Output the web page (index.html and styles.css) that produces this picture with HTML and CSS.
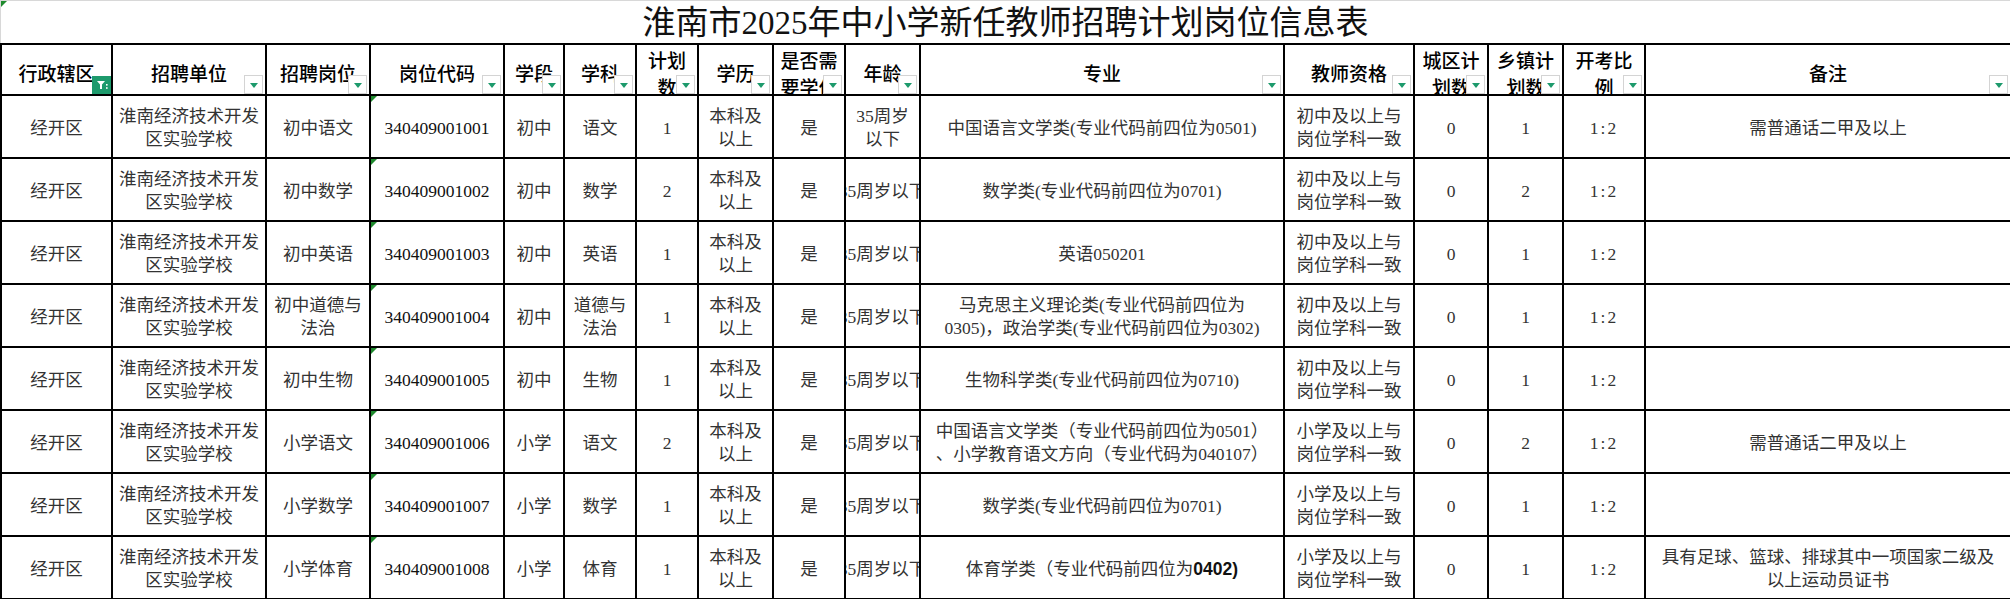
FILE: index.html
```html
<!DOCTYPE html>
<html lang="zh-CN">
<head>
<meta charset="utf-8">
<title>淮南市2025年中小学新任教师招聘计划岗位信息表</title>
<link rel="stylesheet" href="styles.css">
</head>
<body>
<div class="sheet">
  <div class="title"><span class="mark"></span>淮南市2025年中小学新任教师招聘计划岗位信息表</div>
  <table class="grid">
    <colgroup>
      <col class="c1"><col class="c2"><col class="c3"><col class="c4"><col class="c5"><col class="c6"><col class="c7"><col class="c8">
      <col class="c9"><col class="c10"><col class="c11"><col class="c12"><col class="c13"><col class="c14"><col class="c15"><col class="c16">
    </colgroup>
    <thead>
      <tr class="hrow">
        <th><div class="h">行政辖区</div><span class="filter on"><svg viewBox="0 0 18 18" width="18" height="18"><path d="M4 5h8l-3 3.5v4.5h-2v-4.5z" fill="#fff"/><rect x="13" y="8" width="1.6" height="1.6" fill="#fff"/><rect x="13" y="11.2" width="1.6" height="1.6" fill="#fff"/></svg></span></th>
        <th><div class="h">招聘单位</div><span class="filter"><i></i></span></th>
        <th><div class="h">招聘岗位</div><span class="filter"><i></i></span></th>
        <th><div class="h">岗位代码</div><span class="filter"><i></i></span></th>
        <th><div class="h">学段</div><span class="filter"><i></i></span></th>
        <th><div class="h">学科</div><span class="filter"><i></i></span></th>
        <th><div class="h">计划<br>数</div><span class="filter"><i></i></span></th>
        <th><div class="h">学历</div><span class="filter"><i></i></span></th>
        <th><div class="h">是否需<br>要学位</div><span class="filter"><i></i></span></th>
        <th><div class="h">年龄</div><span class="filter"><i></i></span></th>
        <th><div class="h">专业</div><span class="filter"><i></i></span></th>
        <th><div class="h">教师资格</div><span class="filter"><i></i></span></th>
        <th><div class="h">城区计<br>划数</div><span class="filter"><i></i></span></th>
        <th><div class="h">乡镇计<br>划数</div><span class="filter"><i></i></span></th>
        <th><div class="h">开考比<br>例</div><span class="filter"><i></i></span></th>
        <th><div class="h">备注</div><span class="filter"><i></i></span></th>
      </tr>
    </thead>
    <tbody>
      <tr>
        <td>经开区</td><td>淮南经济技术开发<br>区实验学校</td><td>初中语文</td><td class="code">340409001001</td>
        <td>初中</td><td>语文</td><td>1</td><td>本科及<br>以上</td><td>是</td><td>35周岁<br>以下</td>
        <td>中国语言文学类(专业代码前四位为0501)</td><td>初中及以上与<br>岗位学科一致</td><td>0</td><td>1</td><td class="ratio">1:2</td><td>需普通话二甲及以上</td>
      </tr>
      <tr>
        <td>经开区</td><td>淮南经济技术开发<br>区实验学校</td><td>初中数学</td><td class="code">340409001002</td>
        <td>初中</td><td>数学</td><td>2</td><td>本科及<br>以上</td><td>是</td><td class="clip"><div>35周岁以下</div></td>
        <td>数学类(专业代码前四位为0701)</td><td>初中及以上与<br>岗位学科一致</td><td>0</td><td>2</td><td class="ratio">1:2</td><td></td>
      </tr>
      <tr>
        <td>经开区</td><td>淮南经济技术开发<br>区实验学校</td><td>初中英语</td><td class="code">340409001003</td>
        <td>初中</td><td>英语</td><td>1</td><td>本科及<br>以上</td><td>是</td><td class="clip"><div>35周岁以下</div></td>
        <td>英语050201</td><td>初中及以上与<br>岗位学科一致</td><td>0</td><td>1</td><td class="ratio">1:2</td><td></td>
      </tr>
      <tr>
        <td>经开区</td><td>淮南经济技术开发<br>区实验学校</td><td>初中道德与<br>法治</td><td class="code">340409001004</td>
        <td>初中</td><td>道德与<br>法治</td><td>1</td><td>本科及<br>以上</td><td>是</td><td class="clip"><div>35周岁以下</div></td>
        <td>马克思主义理论类(专业代码前四位为<br>0305)，政治学类(专业代码前四位为0302)</td><td>初中及以上与<br>岗位学科一致</td><td>0</td><td>1</td><td class="ratio">1:2</td><td></td>
      </tr>
      <tr>
        <td>经开区</td><td>淮南经济技术开发<br>区实验学校</td><td>初中生物</td><td class="code">340409001005</td>
        <td>初中</td><td>生物</td><td>1</td><td>本科及<br>以上</td><td>是</td><td class="clip"><div>35周岁以下</div></td>
        <td>生物科学类(专业代码前四位为0710)</td><td>初中及以上与<br>岗位学科一致</td><td>0</td><td>1</td><td class="ratio">1:2</td><td></td>
      </tr>
      <tr>
        <td>经开区</td><td>淮南经济技术开发<br>区实验学校</td><td>小学语文</td><td class="code">340409001006</td>
        <td>小学</td><td>语文</td><td>2</td><td>本科及<br>以上</td><td>是</td><td class="clip"><div>35周岁以下</div></td>
        <td>中国语言文学类（专业代码前四位为0501）<br>、小学教育语文方向（专业代码为040107）</td><td>小学及以上与<br>岗位学科一致</td><td>0</td><td>2</td><td class="ratio">1:2</td><td>需普通话二甲及以上</td>
      </tr>
      <tr>
        <td>经开区</td><td>淮南经济技术开发<br>区实验学校</td><td>小学数学</td><td class="code">340409001007</td>
        <td>小学</td><td>数学</td><td>1</td><td>本科及<br>以上</td><td>是</td><td class="clip"><div>35周岁以下</div></td>
        <td>数学类(专业代码前四位为0701)</td><td>小学及以上与<br>岗位学科一致</td><td>0</td><td>1</td><td class="ratio">1:2</td><td></td>
      </tr>
      <tr>
        <td>经开区</td><td>淮南经济技术开发<br>区实验学校</td><td>小学体育</td><td class="code">340409001008</td>
        <td>小学</td><td>体育</td><td>1</td><td>本科及<br>以上</td><td>是</td><td class="clip"><div>35周岁以下</div></td>
        <td>体育学类（专业代码前四位为<span class="sans">0402)</span></td><td>小学及以上与<br>岗位学科一致</td><td>0</td><td>1</td><td class="ratio">1:2</td><td>具有足球、篮球、排球其中一项国家二级及<br>以上运动员证书</td>
      </tr>
    </tbody>
  </table>
</div>
</body>
</html>
```

FILE: styles.css
```css
html, body {
  margin: 0;
  padding: 0;
  background: #fff;
}

.sheet {
  width: 2010px;
}

.title {
  position: relative;
  border-top: 1px solid #d8d8d8;
  border-left: 1px solid #d8d8d8;
  box-sizing: border-box;
  height: 43px;
  text-align: center;
  font-family: "Liberation Serif", "Noto Sans CJK SC", serif;
  font-size: 33px;
  line-height: 44px;
  color: #111;
  white-space: nowrap;
}

.mark {
  position: absolute;
  left: 0;
  top: 0;
  width: 0;
  height: 0;
  border-top: 6px solid #1f8a2e;
  border-right: 6px solid transparent;
}

.grid {
  border-collapse: collapse;
  table-layout: fixed;
  width: 2010px;
}

.c1 { width: 111px; }
.c2 { width: 154px; }
.c3 { width: 104px; }
.c4 { width: 134px; }
.c5 { width: 60px; }
.c6 { width: 72px; }
.c7 { width: 62px; }
.c8 { width: 75px; }
.c9 { width: 72px; }
.c10 { width: 75px; }
.c11 { width: 364px; }
.c12 { width: 130px; }
.c13 { width: 74px; }
.c14 { width: 75px; }
.c15 { width: 82px; }
.c16 { width: 366px; }

.grid th,
.grid td {
  border: 2px solid #000;
  padding: 0;
  text-align: center;
  vertical-align: middle;
  overflow: hidden;
  white-space: nowrap;
}

.grid th {
  position: relative;
  height: 49px;
  vertical-align: top;
  font-family: "Noto Sans CJK SC", sans-serif;
  font-weight: 500;
  font-size: 19px;
  line-height: 27px;
  color: #000;
}

.grid th .h {
  box-sizing: border-box;
  height: 49px;
  padding-top: 6px;
  display: flex;
  flex-direction: column;
  justify-content: center;
  align-items: center;
}

.grid td {
  height: 63px;
  font-family: "Liberation Serif", "Noto Sans CJK SC", serif;
  font-size: 17.5px;
  line-height: 23px;
  color: #333;
  padding-top: 3px;
  box-sizing: border-box;
}

.grid td.code {
  position: relative;
  color: #111;
}

.grid td.code::before {
  content: "";
  position: absolute;
  left: 0;
  top: 0;
  width: 0;
  height: 0;
  border-top: 6px solid #1f8a2e;
  border-right: 6px solid transparent;
}

.grid td.ratio {
  letter-spacing: 2px;
}

.grid td.clip > div {
  display: flex;
  justify-content: center;
  overflow: hidden;
  white-space: nowrap;
}

.sans {
  font-family: "Liberation Sans", sans-serif;
  font-weight: bold;
  color: #111;
}

.filter {
  position: absolute;
  right: 2px;
  bottom: 0;
  width: 17px;
  height: 17px;
  border: 1px solid #d4d4d4;
  background: #fff;
  box-sizing: content-box;
  display: flex;
  align-items: center;
  justify-content: center;
}

.filter i {
  display: block;
  width: 0;
  height: 0;
  border-left: 4px solid transparent;
  border-right: 4px solid transparent;
  border-top: 5px solid #1d9a6c;
  margin-top: 1px;
}

.filter.on {
  right: 0;
  width: 19px;
  height: 18px;
  border: none;
  background: #1d9a6c;
}
```
